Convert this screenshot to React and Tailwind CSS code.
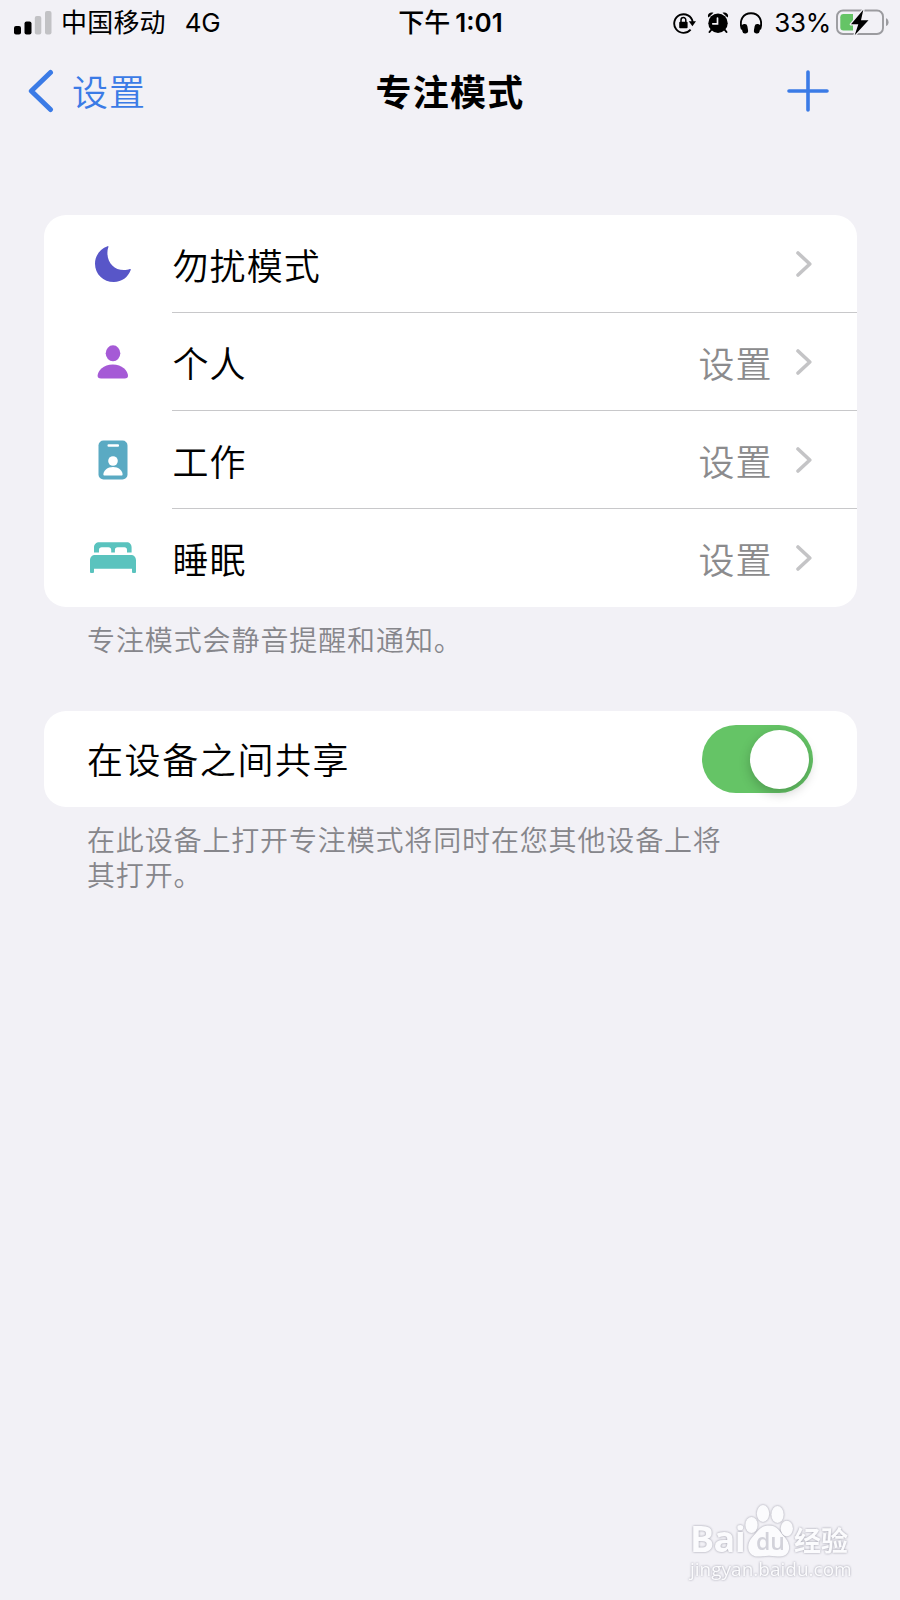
import React from 'react';

const SANS = "font-['Inter','Noto_Sans_CJK_SC',sans-serif]";

const MoonIcon = () => (
  <svg width="36" height="36" viewBox="0 0 36 36" fill="#5856c8">
    <path d="M12.600.2c.6-.3 1 .1.800.8-.7 1.800-1 3.800-1 5.800 0 10 6.700 17.300 16.500 17.300 2.200 0 4.300-.400 5.900-1 .8-.3 1.300.2.900.9C33.200 31 26.800 36 18.900 36 8.300 36 0 28.200 0 17.700 0 9.700 5.100 2.800 12.600.2z" />
  </svg>
);

const PersonIcon = () => (
  <svg width="32" height="34" viewBox="0 0 32 34" fill="#a55ad6">
    <ellipse cx="16" cy="8.300" rx="7.300" ry="8" />
    <path d="M4 33.500C1.600 33.500.6 32.500.6 30.800.6 26 6.600 19.500 15.800 19.500S31 26 31 30.800C31 32.500 30 33.500 27.600 33.500z" />
  </svg>
);

const BadgeIcon = () => (
  <svg width="30" height="40" viewBox="0 0 30 40">
    <rect x="0.500" y="0.500" width="29" height="39" rx="5" fill="#5aaac3" />
    <rect x="9.500" y="4.300" width="11.500" height="2.400" rx="1" fill="#fff" />
    <circle cx="15" cy="21" r="4.800" fill="#fff" />
    <path d="M6.500 35.500c-.7 0-1.100-.4-1.100-1.100 0-3.800 4-7.400 9.600-7.400s9.600 3.600 9.600 7.400c0 .7-.4 1.100-1.100 1.100z" fill="#fff" />
  </svg>
);

const BedIcon = () => (
  <svg width="46" height="32" viewBox="0 0 46 32" fill="#5ac3be">
    <path d="M4 10.500V5.500C4 2.300 6.200.3 9.300.3h27.300c3.100 0 5 2 5 5.200v5h-4.600V8c0-1.700-.9-2.700-2.600-2.700h-6.800c-1.700 0-2.700 1-2.700 2.700v2.500h-3.700V8c0-1.700-1-2.700-2.700-2.700h-6.800C10 5.300 9 6.300 9 8v2.500z" />
    <path d="M0 18.500C0 15 2 13 5.300 13h35.400C44 13 46 15 46 18.500v11.200c0 .8-.5 1.300-1.300 1.300h-1.400c-.8 0-1.300-.5-1.300-1.300V26.700H4v3c0 .8-.5 1.300-1.300 1.300H1.300C.5 31 0 30.500 0 29.700z" />
  </svg>
);

const Chevron = () => (
  <svg width="18" height="28" viewBox="0 0 18 28" fill="none" stroke="#c4c4c6" strokeWidth="3.600" strokeLinecap="round" strokeLinejoin="round">
    <path d="M2 3l11.800 11L2 25" />
  </svg>
);

const MODES = [
  { name: '勿扰模式', icon: <MoonIcon />, value: '' },
  { name: '个人', icon: <PersonIcon />, value: '设置' },
  { name: '工作', icon: <BadgeIcon />, value: '设置' },
  { name: '睡眠', icon: <BedIcon />, value: '设置' },
];

function StatusBar() {
  return (
    <div className="grid grid-cols-[1fr_auto_1fr] items-center h-[46px] pl-[14px] pr-[11px] text-[26px] leading-none text-black">
      <div className="flex items-center">
        <svg width="38" height="24" viewBox="0 0 38 24">
          <rect x="0" y="15" width="7" height="8.500" rx="2" />
          <rect x="10.500" y="10.500" width="7" height="13" rx="2" />
          <rect x="20.800" y="5" width="6.500" height="18.500" rx="2" fill="#c2c2c5" />
          <rect x="31" y="0" width="6.500" height="23.500" rx="2" fill="#c2c2c5" />
        </svg>
        <span className="ml-[9px] tracking-[0.200px]">中国移动</span>
        <span className="ml-[19px] text-[26px] tracking-[-0.400px]">4G</span>
      </div>
      <div className="flex items-center font-medium pr-[2px]">
        <span>下午</span>
        <span className="ml-[5px] text-[26px] font-semibold">1:01</span>
      </div>
      <div className="flex items-center justify-end">
        {/* rotation lock */}
        <svg width="23" height="22" viewBox="0 0 23 22" fill="none" stroke="#000" strokeWidth="1.900">
          <path d="M17.600 17.600A9.300 9.300 0 1 1 19.700 10" />
          <path d="M15.800 9.200H23l-3.600 5z" fill="#000" stroke="none" />
          <rect x="6.200" y="9.800" width="8.400" height="6.500" rx="1" fill="#000" stroke="none" />
          <path d="M8 10V8a2.400 2.400 0 0 1 4.800 0v2" strokeWidth="1.500" />
        </svg>
        {/* alarm */}
        <svg className="ml-[11px] mb-px" width="22" height="23" viewBox="0 0 22 23">
          <circle cx="11" cy="12.200" r="9.700" />
          <path d="M1.500 6.500C-.5 3.500 3 .2 6.500 1.800zM20.500 6.500C22.500 3.500 19 .2 15.500 1.800z" />
          <path d="M4.500 18.500l-2 2.500M17.500 18.500l2 2.500" stroke="#000" strokeWidth="2" strokeLinecap="round" />
          <path d="M10.500 7V12.800H5.800" fill="none" stroke="#f2f1f6" strokeWidth="1.700" strokeLinecap="round" />
        </svg>
        {/* headphones */}
        <svg className="ml-[11px]" width="22" height="22" viewBox="0 0 22 22">
          <path d="M2 17.500C-1.500 8 3.500 1.300 11 1.300S23.500 8 20 17.500" fill="none" stroke="#000" strokeWidth="1.900" />
          <rect x="2" y="12" width="5.800" height="9.500" rx="2.800" transform="rotate(-10 5 17)" />
          <rect x="14.200" y="12" width="5.800" height="9.500" rx="2.800" transform="rotate(10 17 17)" />
        </svg>
        <span className="ml-[12px] text-[26px] tracking-[-0.300px]">33%</span>
        <svg className="ml-[5px] mb-[2px]" width="53" height="27" viewBox="0 0 53 27">
          <rect x="1" y="1.500" width="46" height="23.500" rx="6" fill="none" stroke="#9b9b9f" strokeWidth="1.900" />
          <path d="M50 9.300c3.400.9 3.400 6.900 0 7.800z" fill="#9b9b9f" />
          <path d="M7.500 5H17v16.500H7.500C5.500 21.500 4.300 20.300 4.300 18.200V8.300C4.300 6.200 5.500 5 7.500 5z" fill="#65c466" />
          <path d="M27.300.8L15 15.300h7.300L18.700 26.200 32.500 11.300H25z" stroke="#f2f1f6" strokeWidth="2.600" paintOrder="stroke" strokeLinejoin="round" />
        </svg>
      </div>
    </div>
  );
}

function NavBar() {
  return (
    <div className="grid grid-cols-[1fr_auto_1fr] items-center h-[90px] pl-[27px] pr-[70px] text-[36px] leading-none">
      <div className="flex items-center text-[#3b7be6]">
        <svg width="27" height="44" viewBox="0 0 27 44" fill="none" stroke="currentColor" strokeWidth="5" strokeLinecap="round" strokeLinejoin="round">
          <path d="M23.500 3.500L4.300 22l19.200 18.500" />
        </svg>
        <span className="ml-[18px] pt-[3px] font-[350] tracking-[1px]">设置</span>
      </div>
      <div className="font-bold text-black pl-[43px] pt-[3px] tracking-[1.200px]">专注模式</div>
      <svg className="justify-self-end" width="44" height="44" viewBox="0 0 44 44" stroke="#3b7be6" strokeWidth="3.600" strokeLinecap="round">
        <path d="M22 3v38M3 22h38" />
      </svg>
    </div>
  );
}

function Watermark() {
  return (
    <div className="flex flex-col w-[164px] text-[#fbfbfd] leading-none drop-shadow-[0_0_1px_rgba(130,130,145,0.8)]">
      <div className="flex items-end h-[54px]">
        <span className="w-[54px] font-['Open_Sans'] font-bold text-[36px] leading-[38px] tracking-[-0.600px]">Bai</span>
        <div className="relative w-[50px] h-[54px] shrink-0">
          <svg width="50" height="54" viewBox="0 0 50 54" fill="#fbfbfd">
            <ellipse cx="7.500" cy="21" rx="6.200" ry="8" />
            <ellipse cx="19" cy="9.500" rx="6.200" ry="8.500" />
            <ellipse cx="33.500" cy="10.500" rx="6.200" ry="8.500" />
            <ellipse cx="42.800" cy="24.500" rx="6.200" ry="7.700" />
            <path d="M25 21.500c9 0 10 6 16 12 7 8 5 19-5 19-4 0-6-.8-11-.8s-7 .8-11 .8c-10 0-13-11-6-19 6-6 8-12 17-12z" />
          </svg>
          <span className="absolute left-[12px] top-[26px] font-['Open_Sans'] text-[23px] font-semibold text-[#d2d2da]">du</span>
        </div>
        <span className="font-bold text-[27px] leading-[32px]">经验</span>
      </div>
      <span className="font-['Open_Sans'] text-[19px] leading-[22px] whitespace-nowrap">jingyan.baidu.com</span>
    </div>
  );
}

export default function App() {
  const [shared, setShared] = React.useState(true);

  return (
    <div className={`${SANS} w-[900px] h-[1600px] bg-[#f2f1f6] flex flex-col overflow-hidden`} lang="zh-CN">
      <StatusBar />
      <NavBar />

      <main className="flex-1 pt-[79px] pl-[43.5px] pr-[43.5px]">
        <section className="bg-white rounded-[22px] overflow-hidden">
          {MODES.map((m, i) => (
            <div key={m.name} className="flex h-[98px] text-[36px] leading-none">
              <div className="w-[128px] pl-[10px] flex items-center justify-center">{m.icon}</div>
              <div className={`flex-1 flex items-center pr-[43px] ${i < MODES.length - 1 ? 'border-b border-[#c8c8ca]' : ''}`}>
                <span className="flex-1 font-[350] text-black tracking-[1.100px] pl-[1px] pt-[6px]">{m.name}</span>
                <span className="font-[350] text-[#8b8b8d] tracking-[1px] pt-[6px] mr-[23px]">{m.value}</span>
                <Chevron />
              </div>
            </div>
          ))}
        </section>
        <p className="pl-[43.5px] mt-[17px] text-[28px] font-[350] leading-[35px] tracking-[0.900px] text-[#86868b]">专注模式会静音提醒和通知。</p>

        <section className="mt-[52px] h-[96px] bg-white rounded-[22px] flex items-center justify-between pl-[43.5px] pr-[43.5px]">
          <span className="text-[36px] font-[350] leading-none tracking-[1.600px] pt-[4px] text-black">在设备之间共享</span>
          <button onClick={() => setShared(!shared)}
            className={`w-[111px] h-[68px] rounded-full p-[4px] flex items-center ${shared ? 'bg-[#65c466] justify-end' : 'bg-[#e9e9eb] justify-start'}`}>
            <span className="w-[59px] h-[59px] rounded-full bg-white shadow-[0_4px_12px_rgba(0,0,0,0.22)]" />
          </button>
        </section>
        <p className="pl-[43.5px] w-[700px] mt-[17px] text-[28px] font-[350] leading-[35px] tracking-[0.850px] text-[#86868b]">在此设备上打开专注模式将同时在您其他设备上将其打开。</p>
      </main>

      <footer className="flex justify-end pr-[46px] pb-[20px]">
        <Watermark />
      </footer>
    </div>
  );
}
